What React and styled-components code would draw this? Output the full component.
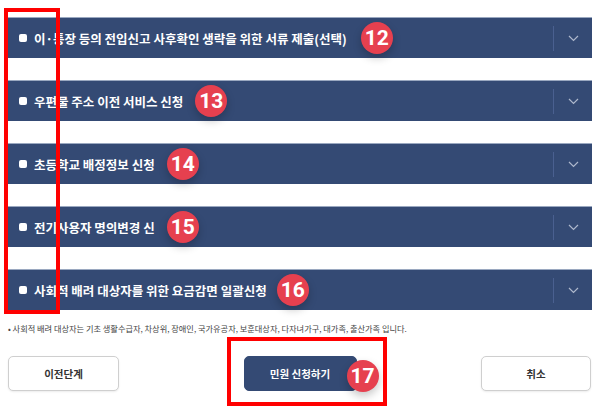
import React from "react";
import styled, { createGlobalStyle } from "styled-components";

const GlobalStyle = createGlobalStyle`
  html, body {
    margin: 0;
    padding: 0;
    background: #fff;
    font-family: "Noto Sans CJK KR", "Noto Sans", sans-serif;
  }
`;

const Page = styled.div`
  position: relative;
  width: 604px;
  height: 411px;
  overflow: hidden;
  background: #fff;
`;

const List = styled.div`
  display: flex;
  flex-direction: column;
  gap: 22px;
  padding: 17px 12px 0 7px;
`;

const Bar = styled.div`
  display: flex;
  align-items: center;
  height: 41px;
  box-sizing: border-box;
  background: #344a74;
  border-top: 1px solid #9aa8c0;
  padding-left: 12px;
`;

const Title = styled.div`
  flex: 1;
  display: flex;
  align-items: center;
  min-width: 0;
`;

const Check = styled.span`
  width: 8px;
  height: 8px;
  border-radius: 2px;
  background: #fff;
  margin-right: 7px;
  flex: none;
`;

const Label = styled.span`
  color: #fff;
  font-size: 12.5px;
  font-weight: 700;
  white-space: nowrap;
`;

const Badge = styled.span`
  display: inline-flex;
  align-items: center;
  justify-content: center;
  width: 32px;
  height: 32px;
  border-radius: 50%;
  background: #e6404f;
  color: #fff;
  font-family: Roboto, "Liberation Sans", sans-serif;
  font-weight: 700;
  font-size: 21px;
  box-shadow: 0 4px 8px rgba(0, 0, 0, 0.22);
  margin-left: ${(p) => p.gap || 12}px;
  flex: none;
`;

const Divider = styled.span`
  width: 1px;
  height: 25px;
  background: #4a6090;
`;

const Chevron = styled.span`
  width: 38px;
  display: flex;
  align-items: center;
  justify-content: center;
`;

const Note = styled.p`
  margin: 13px 0 0 8px;
  font-size: 8.2px;
  line-height: 10px;
  color: #444;
  white-space: nowrap;
`;

const Actions = styled.div`
  display: flex;
  justify-content: space-between;
  padding: 0 13px 0 8px;
  margin-top: 23px;
`;

const ButtonWrap = styled.div`
  position: relative;
`;

const Button = styled.button`
  width: ${(p) => p.w}px;
  height: 35px;
  box-sizing: border-box;
  border-radius: 5px;
  font-family: "Noto Sans CJK KR", "Noto Sans", sans-serif;
  font-size: 10.5px;
  font-weight: 700;
  cursor: pointer;
  ${(p) =>
    p.primary
      ? `
    background: #344a74;
    border: 1px solid #344a74;
    color: #fff;
  `
      : `
    background: #fff;
    border: 1px solid #cfcfcf;
    color: #333;
    box-shadow: 0 1px 2px rgba(0,0,0,0.08);
  `}
`;

const FloatBadge = styled(Badge)`
  position: absolute;
  left: 103px;
  top: 4px;
  margin: 0;
`;

const Highlight = styled.div`
  position: absolute;
  box-sizing: border-box;
  border: 4px solid #f00;
  pointer-events: none;
`;

const rows = [
  { text: "이·통장 등의 전입신고 사후확인 생략을 위한 서류 제출(선택)", n: 12, gap: 14 },
  { text: "우편물 주소 이전 서비스 신청", n: 13 },
  { text: "초등학교 배정정보 신청", n: 14 },
  { text: "전기사용자 명의변경 신", n: 15 },
  { text: "사회적 배려 대상자를 위한 요금감면 일괄신청", n: 16, gap: 10 },
];

const ChevronIcon = () => (
  <svg width="11" height="7" viewBox="0 0 11 7">
    <path d="M1 1l4.5 4.5L10 1" fill="none" stroke="#aeb8cc" strokeWidth="1.2" />
  </svg>
);

export default function App() {
  return (
    <Page>
      <GlobalStyle />
      <List>
        {rows.map((r) => (
          <Bar key={r.n}>
            <Title>
              <Check />
              <Label>{r.text}</Label>
              <Badge gap={r.gap}>{r.n}</Badge>
            </Title>
            <Divider />
            <Chevron>
              <ChevronIcon />
            </Chevron>
          </Bar>
        ))}
      </List>
      <Note>
        • 사회적 배려 대상자는 기초 생활수급자, 차상위, 장애인, 국가유공자, 보훈대상자, 다자녀가구, 대가족, 출산가족 입니다.
      </Note>
      <Actions>
        <Button w={111}>이전단계</Button>
        <ButtonWrap>
          <Button w={113} primary>
            민원 신청하기
          </Button>
          <FloatBadge>17</FloatBadge>
        </ButtonWrap>
        <Button w={110}>취소</Button>
      </Actions>
      <Highlight style={{ left: 4, top: 8, width: 56, height: 306 }} />
      <Highlight style={{ left: 227, top: 337, width: 160, height: 69 }} />
    </Page>
  );
}
